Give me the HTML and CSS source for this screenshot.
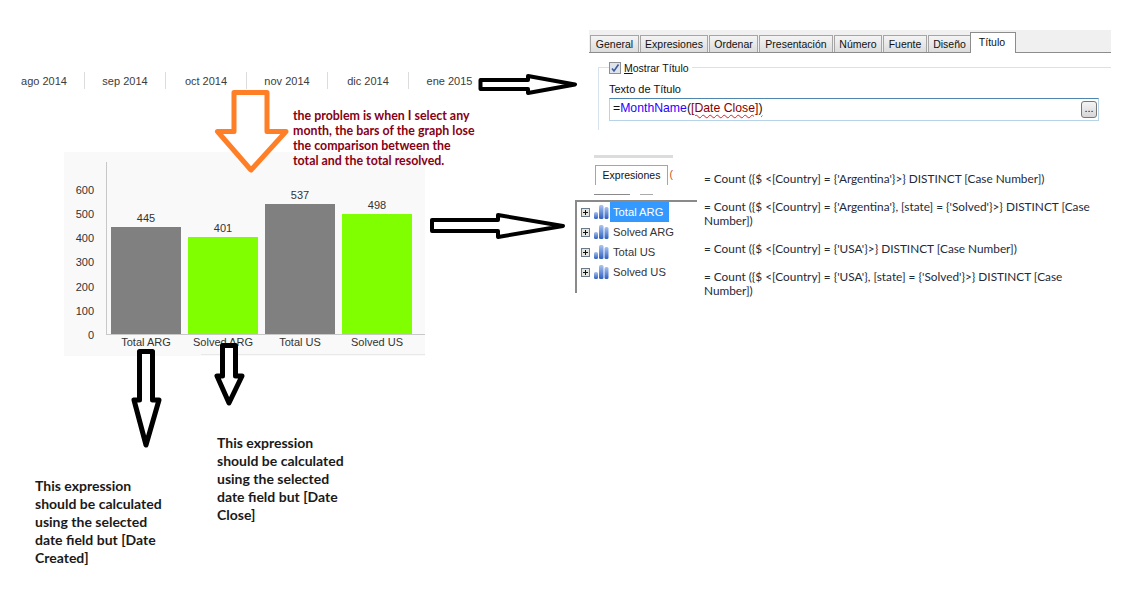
FILE: index.html
```html
<!DOCTYPE html>
<html lang="es">
<head>
<meta charset="utf-8">
<title>QlikView chart annotations</title>
<link rel="stylesheet" href="styles.css">
</head>
<body>
<main class="canvas">

  <ul class="months">
    <li>ago 2014</li><li>sep 2014</li><li>oct 2014</li><li>nov 2014</li><li>dic 2014</li><li>ene 2015</li>
  </ul>

  <section class="dialog">
    <nav class="tabs">
      <span class="tab w-general">General</span>
      <span class="tab w-expr">Expresiones</span>
      <span class="tab w-ord">Ordenar</span>
      <span class="tab w-pres">Presentación</span>
      <span class="tab w-num">Número</span>
      <span class="tab w-fuente">Fuente</span>
      <span class="tab w-dis">Diseño</span>
      <span class="tab active">Título</span>
    </nav>
    <div class="group">
      <div class="legend">
        <span class="check"><svg width="12" height="12" viewBox="0 0 12 12"><rect x=".5" y=".5" width="11" height="11" fill="#dfe3ea" stroke="#8e8f91"/><path d="M3 6.500 5 9 9.500 2.500" fill="none" stroke="#3d5a9c" stroke-width="1.600"/></svg></span>
        <span><u>M</u>ostrar Título</span>
      </div>
      <label class="field-label">Texto de Título</label>
      <div class="input">
        <span class="formula">=<span class="fn">MonthName</span>(<span class="squiggle"><span class="field">[Date Close]</span>)</span></span>
        <span class="dots">...</span>
      </div>
    </div>
  </section>

  <section class="chart">
    <div class="ticks">
      <span>600</span><span>500</span><span>400</span><span>300</span><span>200</span><span>100</span><span>0</span>
    </div>
    <div class="plot">
      <div class="col"><span class="val">445</span><div class="bar grey" style="height:107px"></div></div>
      <div class="col"><span class="val">401</span><div class="bar green" style="height:97px"></div></div>
      <div class="col"><span class="val">537</span><div class="bar grey" style="height:130px"></div></div>
      <div class="col"><span class="val">498</span><div class="bar green" style="height:120px"></div></div>
    </div>
    <div class="xlabels">
      <span>Total ARG</span><span>Solved ARG</span><span>Total US</span><span>Solved US</span>
    </div>
  </section>

  <p class="note problem">the problem is when I select any<br>month, the bars of the graph lose<br>the comparison between the<br>total and the total resolved.</p>

  <section class="expr-panel">
    <div class="expr-head">
      <span class="expr-tab">Expresiones</span>
      <span class="expr-frag">(</span>
    </div>
    <div class="expr-rule"><i></i><i></i></div>
  </section>

  <ul class="tree">
    <li><svg class="plus" viewBox="0 0 9 9"><rect x=".5" y=".5" width="8" height="8" fill="#e6e6e0" stroke="#6b7a89"/><path d="M2 4.500h5M4.500 2v5" stroke="#111"/></svg><svg class="bars" viewBox="0 0 15 14"><use href="#barsym"/></svg><span class="selected">Total ARG</span></li>
    <li><svg class="plus" viewBox="0 0 9 9"><rect x=".5" y=".5" width="8" height="8" fill="#e6e6e0" stroke="#6b7a89"/><path d="M2 4.500h5M4.500 2v5" stroke="#111"/></svg><svg class="bars" viewBox="0 0 15 14"><use href="#barsym"/></svg><span>Solved ARG</span></li>
    <li><svg class="plus" viewBox="0 0 9 9"><rect x=".5" y=".5" width="8" height="8" fill="#e6e6e0" stroke="#6b7a89"/><path d="M2 4.500h5M4.500 2v5" stroke="#111"/></svg><svg class="bars" viewBox="0 0 15 14"><use href="#barsym"/></svg><span>Total US</span></li>
    <li><svg class="plus" viewBox="0 0 9 9"><rect x=".5" y=".5" width="8" height="8" fill="#e6e6e0" stroke="#6b7a89"/><path d="M2 4.500h5M4.500 2v5" stroke="#111"/></svg><svg class="bars" viewBox="0 0 15 14"><use href="#barsym"/></svg><span>Solved US</span></li>
  </ul>

  <div class="exprs">
    <p>= Count ({$ &lt;[Country] = {'Argentina'}&gt;} DISTINCT [Case Number])</p>
    <p>= Count ({$ &lt;[Country] = {'Argentina'}, [state] = {'Solved'}&gt;} DISTINCT [Case Number])</p>
    <p>= Count ({$ &lt;[Country] = {'USA'}&gt;} DISTINCT [Case Number])</p>
    <p>= Count ({$ &lt;[Country] = {'USA'}, [state] = {'Solved'}&gt;} DISTINCT [Case Number])</p>
  </div>

  <p class="note big created">This expression<br>should be calculated<br>using the selected<br>date field but [Date<br>Created]</p>
  <p class="note big closed">This expression<br>should be calculated<br>using the selected<br>date field but [Date<br>Close]</p>

  <svg class="arrows" width="1129" height="607" viewBox="0 0 1129 607">
    <defs>
      <linearGradient id="bargrad" x1="0" y1="0" x2="0" y2="1">
        <stop offset="0" stop-color="#a9c4ee"/>
        <stop offset="1" stop-color="#2f5fc0"/>
      </linearGradient>
      <symbol id="barsym" viewBox="0 0 15 14">
        <rect x="0" y="7" width="4" height="7" rx="1.500" fill="url(#bargrad)"/>
        <rect x="5" y="0" width="4.500" height="14" rx="1.500" fill="url(#bargrad)"/>
        <rect x="10.500" y="2" width="4" height="12" rx="1.500" fill="url(#bargrad)"/>
      </symbol>
    </defs>
    <path class="orange" d="M234 92.500H267V131.500H286L251 170 217.500 131.500H234Z"/>
    <path class="black" d="M480.500 80H528V76L575 84.500 528 93V89H480.500Z"/>
    <path class="black" d="M432 220H498V215L563 226 498 237V231H432Z"/>
    <path class="black thick" d="M139.500 351.500H152.500V400H159L146 445 134 400H139.500Z"/>
    <path class="black thick" d="M222.500 345.500H235.500V376H242L229 403 217 376H222.500Z"/>
  </svg>
</main>
</body>
</html>
```

FILE: styles.css
```css
* { box-sizing: border-box; }
html, body { margin: 0; padding: 0; background: #fff; overflow: hidden; }
.canvas {
  position: relative;
  width: 1129px;
  height: 607px;
  font-family: "Liberation Sans", Arial, sans-serif;
  font-size: 11px;
  color: #333;
}
ul { list-style: none; margin: 0; padding: 0; }
p { margin: 0; }

/* month strip */
.months {
  position: absolute;
  left: 4px;
  top: 72px;
  display: flex;
  height: 17px;
}
.months li {
  width: 81px;
  line-height: 18px;
  text-align: center;
  color: #3c3c3c;
  border-right: 1px solid #dcdcdc;
}
.months li:last-child { border-right: 0; }

/* properties dialog */
.dialog {
  position: absolute;
  left: 589px;
  top: 30px;
  width: 522px;
  color: #111;
  font-size: 10.500px;
}
.tabs {
  display: flex;
  align-items: flex-end;
  gap: 1px;
  height: 23px;
  padding-left: 1px;
  background: #f0f0f0;
  border-bottom: 1px solid #8c8c8c;
}
.tab {
  height: 17px;
  line-height: 16px;
  text-align: center;
  background: linear-gradient(#f4f4f4, #dcdcdc);
  border: 1px solid #a5a5a5;
  border-bottom: 0;
}
.w-general { width: 49px; }
.w-expr { width: 68px; }
.w-ord { width: 49px; }
.w-pres { width: 74px; }
.w-num { width: 48px; }
.w-fuente { width: 44px; }
.w-dis { width: 43px; }
.tab.active {
  width: 46px;
  height: 21px;
  line-height: 18px;
  margin: 0 0 -1px -2px;
  padding-right: 2px;
  background: #fff;
  border-color: #8c8c8c;
  position: relative;
}
.group {
  position: relative;
  margin: 14px 0 0 9px;
  padding: 0 0 0 10px;
  height: 63px;
  border-left: 1px solid #d8e2ee;
  border-top: 1px solid #d8e2ee;
}
.legend {
  display: flex;
  align-items: center;
  gap: 3px;
  width: fit-content;
  height: 13px;
  margin-top: -7px;
  background: #fff;
  padding-right: 3px;
}
.check { display: flex; }
.field-label { display: block; margin-top: 8px; line-height: 14px; font-size: 11px; }
.input {
  display: flex;
  align-items: center;
  justify-content: space-between;
  width: 490px;
  height: 23px;
  margin-top: 2px;
  padding: 0 1px 0 3px;
  border: 1px solid #b6d3e8;
  border-top-color: #4f86b0;
}
.formula { font-size: 12.250px; color: #111; margin-bottom: 3px; }
.fn { color: #3000ff; }
.field { color: #8a0000; }
.squiggle { text-decoration: underline wavy #e02020 1px; text-underline-offset: 2px; }
.dots {
  width: 16px;
  height: 17px;
  line-height: 13px;
  text-align: center;
  font-size: 11px;
  background: linear-gradient(#f4f4f4, #d6d6d6);
  border: 1px solid #777;
  border-radius: 3px;
}

/* notes */
.note { position: absolute; font-family: Lato, "Open Sans", sans-serif; font-weight: 700; }
.problem {
  left: 293px;
  top: 108px;
  font-size: 12.400px;
  line-height: 15px;
  color: #880015;
}
.big { font-size: 14px; line-height: 18px; color: #1a1a1a; }
.created { left: 35px; top: 477px; }
.closed { left: 217px; top: 434px; }

/* chart */
.chart {
  position: absolute;
  left: 64px;
  top: 152px;
  width: 361px;
  height: 204px;
  padding-top: 10px;
  background: #f9f9f9;
  display: grid;
  grid-template-columns: 42px 1fr;
  grid-template-rows: 173px 14px;
}
.chart::after {
  content: "";
  position: absolute;
  left: 137px;
  right: 0;
  bottom: 1px;
  height: 1px;
  background: #e8e8e8;
}
.ticks {
  grid-row: 1 / 3;
  display: flex;
  flex-direction: column;
  justify-content: flex-end;
  align-items: flex-end;
  padding: 0 12px 2px 0;
}
.ticks span { height: 24.170px; line-height: 24px; color: #333; }
.plot {
  display: flex;
  align-items: flex-end;
  gap: 7px;
  padding-left: 4px;
  border-left: 1px solid #c8c8c8;
  border-bottom: 1px solid #c8c8c8;
}
.col {
  width: 70px;
  display: flex;
  flex-direction: column;
  align-items: center;
  gap: 2px;
}
.val { line-height: 13px; }
.bar { width: 70px; }
.grey { background: #808080; }
.green { background: #80ff00; }
.xlabels {
  grid-column: 2;
  display: flex;
  gap: 7px;
  padding-left: 5px;
}
.xlabels span { width: 70px; text-align: center; line-height: 15px; white-space: nowrap; }

/* expressions tab fragment */
.expr-panel {
  position: absolute;
  left: 594px;
  top: 155px;
  width: 79px;
  height: 41px;
  border-top: 3px solid #dcdcdc;
  color: #111;
  font-size: 10.500px;
}
.expr-head {
  display: flex;
  align-items: flex-end;
  justify-content: space-between;
  height: 27px;
  padding-left: 1px;
}
.expr-tab {
  width: 73px;
  height: 20px;
  line-height: 18px;
  text-align: center;
  border: 1px solid #a5a5a5;
  border-bottom: 0;
}
.expr-frag { color: #c8501e; line-height: 18px; height: 20px; }
.expr-rule { display: flex; margin-top: 9px; }
.expr-rule i { display: block; height: 1px; background: #8a8a8a; width: 36px; }
.expr-rule i + i { width: 13px; margin-left: 10px; background: #aaa; }

/* tree */
.tree {
  position: absolute;
  left: 575px;
  top: 200px;
  width: 122px;
  height: 93px;
  border-left: 2px solid #8a8a8a;
  border-top: 2px solid #8a8a8a;
  color: #333;
}
.tree li {
  display: flex;
  align-items: center;
  height: 20px;
  padding-left: 4px;
}
.plus { width: 9px; height: 9px; margin-right: 4px; }
.bars { width: 15px; height: 14px; margin-right: 1px; }
.tree span { padding: 0 4px 0 3px; line-height: 20px; font-size: 11.200px; }
.tree .selected { background: #3399ff; color: #fff; width: 59px; padding-right: 0; }

/* expression text */
.exprs {
  position: absolute;
  left: 704px;
  top: 172px;
  width: 400px;
  display: flex;
  flex-direction: column;
  gap: 14px;
  font-family: Lato, "Open Sans", sans-serif;
  font-size: 11.800px;
  line-height: 14px;
  color: #1e2a3a;
}

/* hand-drawn arrows */
.arrows { position: absolute; left: 0; top: 0; pointer-events: none; }
.arrows path { fill: #fff; stroke-linejoin: round; }
.orange { stroke: #ff7f27; stroke-width: 5; }
.black { stroke: #000; stroke-width: 4; }
.thick { stroke-width: 5; }
```
